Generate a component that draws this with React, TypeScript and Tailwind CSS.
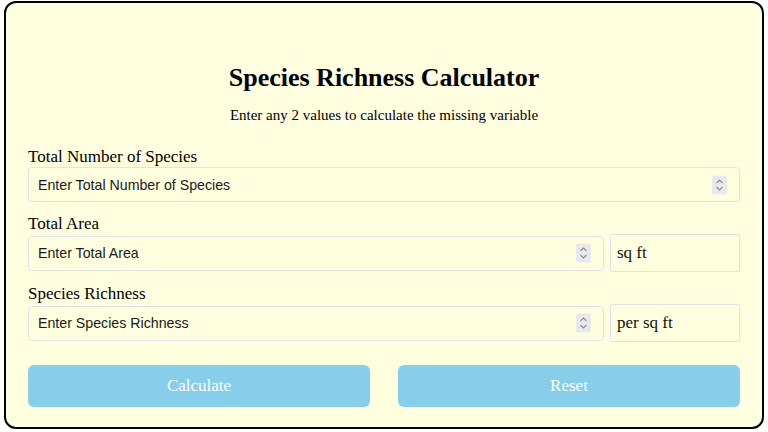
import { useState } from "react";

const serif = "font-['Liberation_Serif','Times_New_Roman',serif]";
const sans = "font-['Liberation_Sans',Arial,sans-serif]";

function Spinner() {
  return (
    <div className="absolute right-[13px] top-1/2 -translate-y-1/2 w-[15px] h-[19px] bg-[#e9e9ed] rounded-[2px] flex items-center justify-center pointer-events-none">
      <svg width="9" height="13" viewBox="0 0 9 13" fill="none" stroke="#8a8a90" strokeWidth="1.1">
        <path d="M1.5 4.5 L4.5 1.5 L7.5 4.5" />
        <path d="M1.5 8.5 L4.5 11.5 L7.5 8.5" />
      </svg>
    </div>
  );
}

function NumberField({ placeholder, value, onChange }: { placeholder: string; value: string; onChange: (v: string) => void }) {
  return (
    <div className="relative flex-1 min-w-0">
      <input
        type="text"
        inputMode="decimal"
        placeholder={placeholder}
        value={value}
        onChange={e => onChange(e.target.value)}
        className={`${sans} w-full h-[35px] pl-[9px] pr-[36px] text-[14.2px] text-[#1a1a1a] placeholder:text-[#1a1a1a] bg-transparent border border-[#dfe3e6] rounded-[4px] outline-none`}
      />
      <Spinner />
    </div>
  );
}

function UnitBox({ label }: { label: string }) {
  return (
    <div className={`${serif} w-[130px] h-[38px] shrink-0 flex items-center pl-[6px] text-[17px] text-[#111] border border-[#dfe3e6] rounded-[2px]`}>
      {label}
    </div>
  );
}

export default function App() {
  const [species, setSpecies] = useState("");
  const [area, setArea] = useState("");
  const [richness, setRichness] = useState("");

  const calculate = () => {
    const s = parseFloat(species), a = parseFloat(area), r = parseFloat(richness);
    if (!isNaN(s) && !isNaN(a) && isNaN(r) && a !== 0) setRichness(String(s / a));
    else if (!isNaN(s) && isNaN(a) && !isNaN(r) && r !== 0) setArea(String(s / r));
    else if (isNaN(s) && !isNaN(a) && !isNaN(r)) setSpecies(String(a * r));
  };

  const reset = () => {
    setSpecies("");
    setArea("");
    setRichness("");
  };

  return (
    <div className="min-h-screen bg-white pt-px">
      <div className={`${serif} w-[760px] h-[428px] mx-auto bg-[#ffffe0] border-2 border-black rounded-[12px] px-[22px] pt-[60px] text-black`}>
        <h2 className="text-center text-[26px] leading-[30px] font-bold">Species Richness Calculator</h2>
        <p className="mt-[13px] text-center text-[15px] leading-[18px]">Enter any 2 values to calculate the missing variable</p>

        <div className="mt-[23px]">
          <label className="block text-[17px] leading-[20px]">Total Number of Species</label>
          <div className="flex">
            <NumberField placeholder="Enter Total Number of Species" value={species} onChange={setSpecies} />
          </div>
        </div>

        <div className="mt-[12px]">
          <label className="block text-[17px] leading-[20px]">Total Area</label>
          <div className="flex items-center gap-[6px] h-[38px]">
            <NumberField placeholder="Enter Total Area" value={area} onChange={setArea} />
            <UnitBox label="sq ft" />
          </div>
        </div>

        <div className="mt-[12px]">
          <label className="block text-[17px] leading-[20px]">Species Richness</label>
          <div className="flex items-center gap-[6px] h-[38px]">
            <NumberField placeholder="Enter Species Richness" value={richness} onChange={setRichness} />
            <UnitBox label="per sq ft" />
          </div>
        </div>

        <div className="mt-[23px] grid grid-cols-2 gap-[28px]">
          <button onClick={calculate} className="h-[42px] rounded-[6px] bg-[#87ceeb] text-white text-[17px]">Calculate</button>
          <button onClick={reset} className="h-[42px] rounded-[6px] bg-[#87ceeb] text-white text-[17px]">Reset</button>
        </div>
      </div>
    </div>
  );
}
